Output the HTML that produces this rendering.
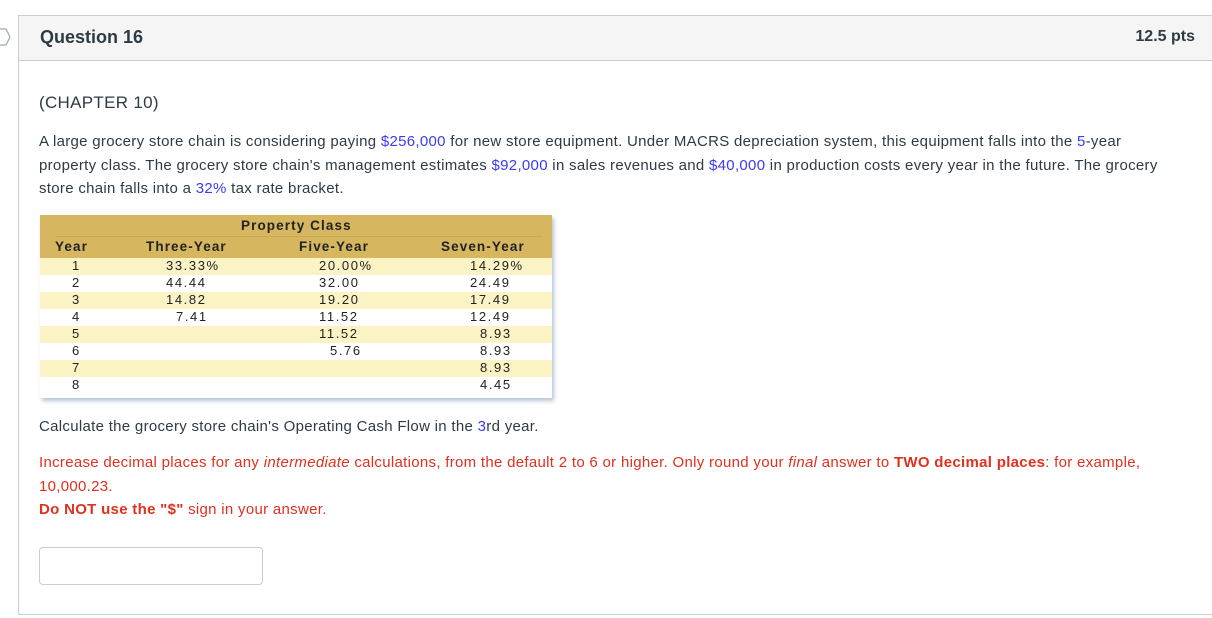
<!DOCTYPE html>
<html><head><meta charset="utf-8"><style>
body{margin:0;width:1212px;height:618px;background:#fff;font-family:"Liberation Sans",sans-serif;color:#2d3b45;position:relative;overflow:hidden}
.box{position:absolute;left:18px;top:15px;width:1200px;height:600px;border:1px solid #c7cdd1;border-right:none;box-sizing:border-box}
.hd{height:44px;background:#f5f5f5;border-bottom:1px solid #c7cdd1;position:relative}
.hd .t{position:absolute;left:21px;top:11px;font-size:18px;font-weight:bold;color:#2d3b45}
.hd .p{position:absolute;right:23px;top:12px;font-size:16px;font-weight:bold;color:#2d3b45}
.txt{position:absolute;left:39px;font-size:15px;line-height:23.5px;color:#2d3b45;width:1160px;letter-spacing:0.3px;white-space:nowrap}
.b{color:#3b3bf0}.r{color:#e0301e}
.tb{position:absolute;left:40px;top:215px;width:512px;height:183px;box-shadow:2px 3px 4px #b8c4d6;background:#fff;color:#222}
.th{background:#d6b760;height:43px;position:relative;font-weight:bold;font-size:13.5px;letter-spacing:1.1px}
.row{height:17px;position:relative;font-size:13px;letter-spacing:1.6px}
.row:nth-child(odd){background:#fcf3c4}
.row span,.th span{position:absolute;top:0px}
</style></head><body>
<svg style="position:absolute;left:0;top:28px" width="12" height="18"><path d="M0 1 L6 1 L10 9 L6 17 L0 17" fill="none" stroke="#9aa8b8" stroke-width="1.2"/></svg>
<div class="box"><div class="hd"><span class="t">Question 16</span><span class="p">12.5 pts</span></div></div>
<div class="txt" style="top:91px;font-size:17px">(CHAPTER 10)</div>
<div class="txt" style="top:130px">A large grocery store chain is considering paying <span class="b">$256,000</span> for new store equipment. Under MACRS depreciation system, this equipment falls into the <span class="b">5</span>-year<br>property class. The grocery store chain's management estimates <span class="b">$92,000</span> in sales revenues and <span class="b">$40,000</span> in production costs every year in the future. The grocery<br>store chain falls into a <span class="b">32%</span> tax rate bracket.</div>
<div class="tb">
<div class="th"><span style="left:201px;top:3px">Property Class</span><div style="position:absolute;left:16px;right:10px;top:21px;border-top:1px solid #c8a850"></div><span style="left:15px;top:24px">Year</span><span style="left:106px;top:24px">Three-Year</span><span style="left:259px;top:24px">Five-Year</span><span style="left:401px;top:24px">Seven-Year</span></div>
<div>
<div class="row"><span style="left:32px">1</span><span style="left:126px">33.33%</span><span style="left:279px">20.00%</span><span style="left:430px">14.29%</span></div>
<div class="row"><span style="left:32px">2</span><span style="left:126px">44.44</span><span style="left:279px">32.00</span><span style="left:430px">24.49</span></div>
<div class="row"><span style="left:32px">3</span><span style="left:126px">14.82</span><span style="left:279px">19.20</span><span style="left:430px">17.49</span></div>
<div class="row"><span style="left:32px">4</span><span style="left:136px">7.41</span><span style="left:279px">11.52</span><span style="left:430px">12.49</span></div>
<div class="row"><span style="left:32px">5</span><span style="left:279px">11.52</span><span style="left:440px">8.93</span></div>
<div class="row"><span style="left:32px">6</span><span style="left:290px">5.76</span><span style="left:440px">8.93</span></div>
<div class="row"><span style="left:32px">7</span><span style="left:440px">8.93</span></div>
<div class="row"><span style="left:32px">8</span><span style="left:440px">4.45</span></div>
</div></div>
<div class="txt" style="top:415px">Calculate the grocery store chain's Operating Cash Flow in the <span class="b">3</span>rd year.</div>
<div class="txt r" style="top:451px">Increase decimal places for any <i>intermediate</i> calculations, from the default 2 to 6 or higher. Only round your <i>final</i> answer to <b>TWO decimal places</b>: for example,<br>10,000.23.<br><b>Do NOT use the "$"</b> sign in your answer.</div>
<div style="position:absolute;left:39px;top:547px;width:222px;height:36px;border:1px solid #c7cdd1;border-radius:4px"></div>
</body></html>
